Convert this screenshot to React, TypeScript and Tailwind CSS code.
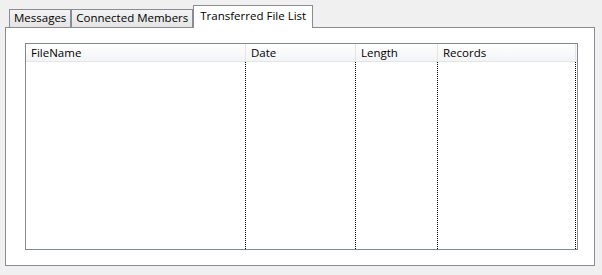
const font = { fontFamily: '"Open Sans", "Noto Sans", sans-serif' }

interface Column {
  title: string
  width: string
}

const columns: Column[] = [
  { title: 'FileName', width: 'w-[220px]' },
  { title: 'Date', width: 'w-[110px]' },
  { title: 'Length', width: 'w-[82px]' },
  { title: 'Records', width: 'w-[138px]' },
]

const tabs = ['Messages', 'Connected Members', 'Transferred File List']

export default function App() {
  const active = 2
  return (
    <div
      className="w-[602px] h-[275px] bg-[#f0f0f0] pt-[5px] pl-[5px] text-[11.5px] text-black overflow-hidden"
      style={font}
    >
      {/* Tab strip */}
      <div className="flex items-end h-[22px] pl-[4px] relative z-10">
        {tabs.map((tab, i) =>
          i === active ? (
            <div
              key={tab}
              className="h-[23px] mb-[-1px] px-[6px] pt-[2px] bg-white border border-b-0 border-[#898c95] leading-[16px]"
            >
              {tab}
            </div>
          ) : (
            <div
              key={tab}
              className="h-[18px] px-[4px] bg-gradient-to-b from-[#f3f3f3] to-[#e4e4e4] border border-b-0 border-[#898c95] leading-[16px]"
            >
              {tab}
            </div>
          )
        )}
      </div>

      {/* Panel */}
      <div className="w-[590px] h-[239px] bg-white border border-[#898c95] pl-[19px] pt-[15px]">
        <div className="w-[553px] h-[207px] border border-[#828790] flex flex-col">
          {/* Header */}
          <div className="flex h-[18px] bg-gradient-to-b from-white to-[#f3f4f6] border-b border-[#e5e5e5]">
            {columns.map((col) => (
              <div
                key={col.title}
                className={`${col.width} border-r border-[#e5e5e5] px-[5px] leading-[17px]`}
              >
                {col.title}
              </div>
            ))}
          </div>
          {/* Body */}
          <div className="flex flex-1">
            {columns.map((col) => (
              <div key={col.title} className={`${col.width} border-r border-dotted border-black`} />
            ))}
          </div>
        </div>
      </div>
    </div>
  )
}
